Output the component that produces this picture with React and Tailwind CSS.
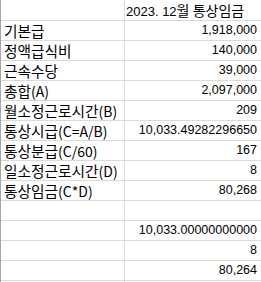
import React from "react";

const rows = [
  ["기본급", "1,918,000"],
  ["정액급식비", "140,000"],
  ["근속수당", "39,000"],
  ["총합(A)", "2,097,000"],
  ["월소정근로시간(B)", "209"],
  ["통상시급(C=A/B)", "10,033.49282296650"],
  ["통상분급(C/60)", "167"],
  ["일소정근로시간(D)", "8"],
  ["통상임금(C*D)", "80,268"],
  ["", ""],
  ["", "10,033.00000000000"],
  ["", "8"],
  ["", "80,264"],
  ["", ""],
];

const kr = { fontFamily: '"Noto Sans CJK KR", sans-serif' };
const num = { fontFamily: '"Liberation Sans", Arial, sans-serif' };

// korean glyphs a bit wider than the latin bits, like the sheet font
function Label({ text }) {
  return text.split(/([가-힣]+)/).map((part, i) =>
    /[가-힣]/.test(part) ? (
      <span key={i} className="text-[14.7px]">{part}</span>
    ) : (
      <span key={i} className="text-[14px]">{part}</span>
    )
  );
}

export default function App() {
  return (
    <div className="w-[261px] h-[282px] overflow-hidden bg-white text-black border-l border-[#a6a6a6]">
      {/* header row */}
      <div className="flex h-[21px] border-b border-[#dadada]">
        <div className="w-[124px] shrink-0 border-r border-[#dadada]" />
        <div className="flex-1 whitespace-nowrap pl-[1px] text-[14px] leading-[20px]" style={kr}>
          <span className="text-[13px]" style={num}>2023. 12</span>월 통상임금
        </div>
      </div>

      {rows.map(([label, value], i) => (
        <div key={i} className="flex h-[20px] border-b border-[#dadada]">
          <div
            className="w-[124px] shrink-0 overflow-hidden whitespace-nowrap border-r border-[#dadada] pl-[3px] leading-[19px]"
            style={kr}
          >
            <Label text={label} />
          </div>
          <div className="flex-1 whitespace-nowrap pr-[4px] text-right text-[12.5px] leading-[19px]" style={num}>
            {value}
          </div>
        </div>
      ))}
    </div>
  );
}
